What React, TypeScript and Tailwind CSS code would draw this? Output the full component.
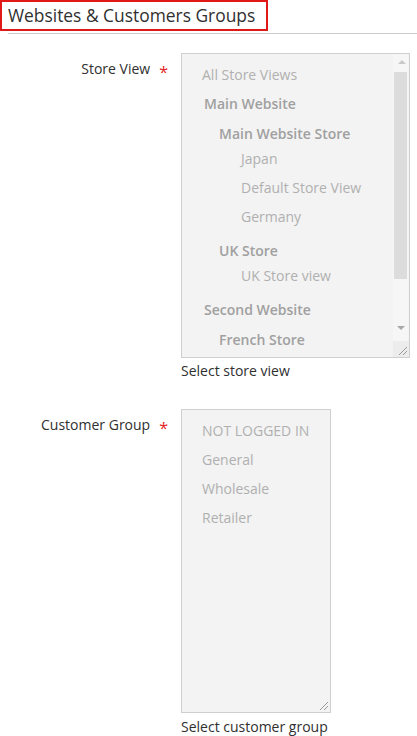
import React from "react";

const storeItems: { t: string; bold?: boolean; indent: number; mt: number }[] = [
  { t: "All Store Views", indent: 20, mt: 0 },
  { t: "Main Website", bold: true, indent: 22, mt: 9 },
  { t: "Main Website Store", bold: true, indent: 37, mt: 10 },
  { t: "Japan", indent: 59, mt: 5 },
  { t: "Default Store View", indent: 59, mt: 9 },
  { t: "Germany", indent: 59, mt: 9 },
  { t: "UK Store", bold: true, indent: 37, mt: 14 },
  { t: "UK Store view", indent: 59, mt: 5 },
  { t: "Second Website", bold: true, indent: 22, mt: 14 },
  { t: "French Store", bold: true, indent: 37, mt: 10 },
];

const groups = ["NOT LOGGED IN", "General", "Wholesale", "Retailer"];

function Grip() {
  return (
    <svg className="absolute right-[2px] bottom-[2px]" width="9" height="9" viewBox="0 0 9 9">
      <line x1="1" y1="9" x2="9" y2="1" stroke="#9a9a9a" strokeWidth="1" />
      <line x1="5" y1="9" x2="9" y2="5" stroke="#9a9a9a" strokeWidth="1" />
    </svg>
  );
}

function Label({ text }: { text: string }) {
  return (
    <div className="w-[181px] shrink-0 flex justify-end pr-[13px] pt-[6px]">
      <span className="text-[14px] text-[#303030] leading-[20px]">{text}</span>
      <span className="ml-[9px] text-[16px] text-[#e22626] leading-[20px] mt-[3px]">*</span>
    </div>
  );
}

export default function App() {
  return (
    <div className="w-[417px] h-[736px] bg-white overflow-hidden" style={{ fontFamily: '"Open Sans", "Noto Sans", sans-serif' }}>
      <div className="h-[34px] border-b border-[#cccccc] ml-[8px] relative">
        <div className="absolute left-[-8px] top-0 w-[268px] h-[31px] border-2 border-[#e01818]" />
        <div className="pt-[3px] text-[17.4px] leading-[24px] text-[#303030]">Websites &amp; Customers Groups</div>
      </div>

      <div className="flex mt-[19px]">
        <Label text="Store View" />
        <div className="flex flex-col">
          <div className="relative w-[229px] h-[305px] bg-[#f3f3f3] border border-[#cfcfcf] overflow-hidden">
            <div className="flex flex-col pt-[11px]">
              {storeItems.map((it) => (
                <div
                  key={it.t}
                  className={
                    "text-[14px] leading-[20px] whitespace-nowrap " +
                    (it.bold ? "font-semibold text-[#a0a0a0]" : "text-[#b0b0b0]")
                  }
                  style={{ paddingLeft: it.indent, marginTop: it.mt }}
                >
                  {it.t}
                </div>
              ))}
            </div>
            <div className="absolute right-[1px] top-0 w-[15px] h-full bg-[#f6f6f6]">
              <div className="absolute left-[5px] top-[6px] w-0 h-0 border-l-[4px] border-r-[4px] border-b-[4px] border-l-transparent border-r-transparent border-b-[#c8c8c8]" />
              <div className="absolute left-[1px] top-[18px] w-[13px] h-[207px] bg-[#dcdcdc]" />
              <div className="absolute left-[4px] top-[272px] w-0 h-0 border-l-[4px] border-r-[4px] border-t-[4px] border-l-transparent border-r-transparent border-t-[#a8a8a8]" />
            </div>
            <div className="absolute right-0 bottom-0 w-[16px] h-[16px] bg-[#ececec]" />
            <Grip />
          </div>
          <div className="mt-[3px] text-[14px] leading-[20px] text-[#303030]">Select store view</div>
        </div>
      </div>

      <div className="flex mt-[28px]">
        <Label text="Customer Group" />
        <div className="flex flex-col">
          <div className="relative w-[150px] h-[304px] bg-[#f3f3f3] border border-[#cfcfcf]">
            <div className="flex flex-col pt-[11px] gap-[9px]">
              {groups.map((g) => (
                <div key={g} className="pl-[20px] text-[14px] leading-[20px] text-[#b0b0b0] whitespace-nowrap">
                  {g}
                </div>
              ))}
            </div>
            <Grip />
          </div>
          <div className="mt-[4px] text-[14px] leading-[20px] text-[#303030]">Select customer group</div>
        </div>
      </div>
    </div>
  );
}
